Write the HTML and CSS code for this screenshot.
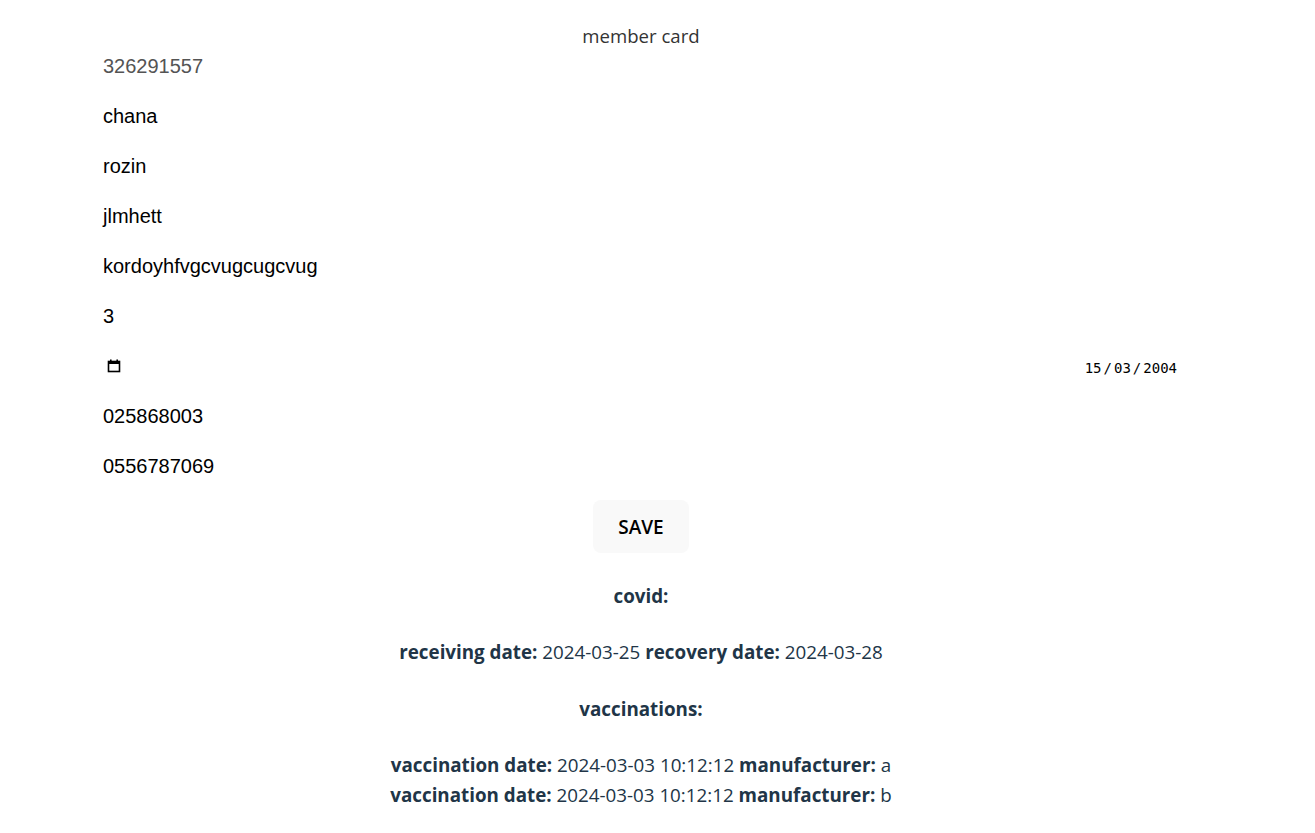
FILE: index.html
```html
<!DOCTYPE html>
<html>
<head>
<meta charset="utf-8">
<link rel="stylesheet" href="styles.css">
</head>
<body>
<div class="page">
  <div class="title">member card</div>
  <div class="fields">
    <div class="field muted">326291557</div>
    <div class="field">chana</div>
    <div class="field">rozin</div>
    <div class="field">jlmhett</div>
    <div class="field">kordoyhfvgcvugcugcvug</div>
    <div class="field">3</div>
    <div class="field date">
      <svg class="cal" width="14" height="14" viewBox="0 0 14 14"><rect x="1.5" y="2.5" width="11" height="10" fill="none" stroke="#000" stroke-width="1.6"/><rect x="1" y="2" width="12" height="3" fill="#000"/><rect x="3" y="0.5" width="1.6" height="2" fill="#000"/><rect x="9.4" y="0.5" width="1.6" height="2" fill="#000"/></svg>
      <span class="dateval"><span class="seg">15</span><span class="sep">/</span><span class="seg">03</span><span class="sep">/</span><span class="seg">2004</span></span>
    </div>
    <div class="field">025868003</div>
    <div class="field">0556787069</div>
  </div>
  <button class="save">SAVE</button>
  <p class="section covid"><b>covid:</b></p>
  <p class="line"><b>receiving date:</b> 2024-03-25 <b>recovery date:</b> 2024-03-28</p>
  <p class="section vaccs"><b>vaccinations:</b></p>
  <div class="vacc">
    <div><b>vaccination date:</b> 2024-03-03 10:12:12 <b>manufacturer:</b> a</div>
    <div><b>vaccination date:</b> 2024-03-03 10:12:12 <b>manufacturer:</b> b</div>
  </div>
</div>
</body>
</html>
```
FILE: styles.css
```css
html, body { margin: 0; padding: 0; background: #fff; }
body {
  font-family: "Open Sans", "Noto Sans", sans-serif;
  color: #213547;
  font-size: 18.8px;
}
.page {
  width: 1282px;
  display: flex;
  flex-direction: column;
  align-items: center;
  padding-top: 24px;
}
.title { font-size: 18.6px; line-height: 24px; color: #333; }
.fields { width: 1076px; display: flex; flex-direction: column; }
.field {
  height: 50px;
  display: flex;
  align-items: center;
  font-family: "Liberation Sans", Arial, sans-serif;
  font-size: 20px;
  color: #000;
  margin-top: -7px;
  margin-bottom: 7px;
}
.field.muted { color: #545454; }
.date { justify-content: space-between; padding-left: 4px; }
.cal { display: block; }
.dateval { display: flex; font-family: "DejaVu Sans Mono", monospace; font-size: 14px; font-weight: 400; margin-right: 1px; padding-top: 3px; }
.seg { padding: 0 1px; }
.sep { padding: 0 1px; }
.save {
  margin-top: 2px;
  width: 96px; height: 53px;
  border: none; border-radius: 8px;
  background: #f9f9f9;
  font-family: "Open Sans", sans-serif;
  font-size: 19px; font-weight: 600;
  color: #000;
}
p { margin: 0; }
.section { line-height: 24px; }
.covid { margin-top: 31px; }
.vaccs { margin-top: 33px; }
.line { margin-top: 32px; line-height: 24px; }
.vacc { margin-top: 29px; line-height: 30px; text-align: center; }
```
